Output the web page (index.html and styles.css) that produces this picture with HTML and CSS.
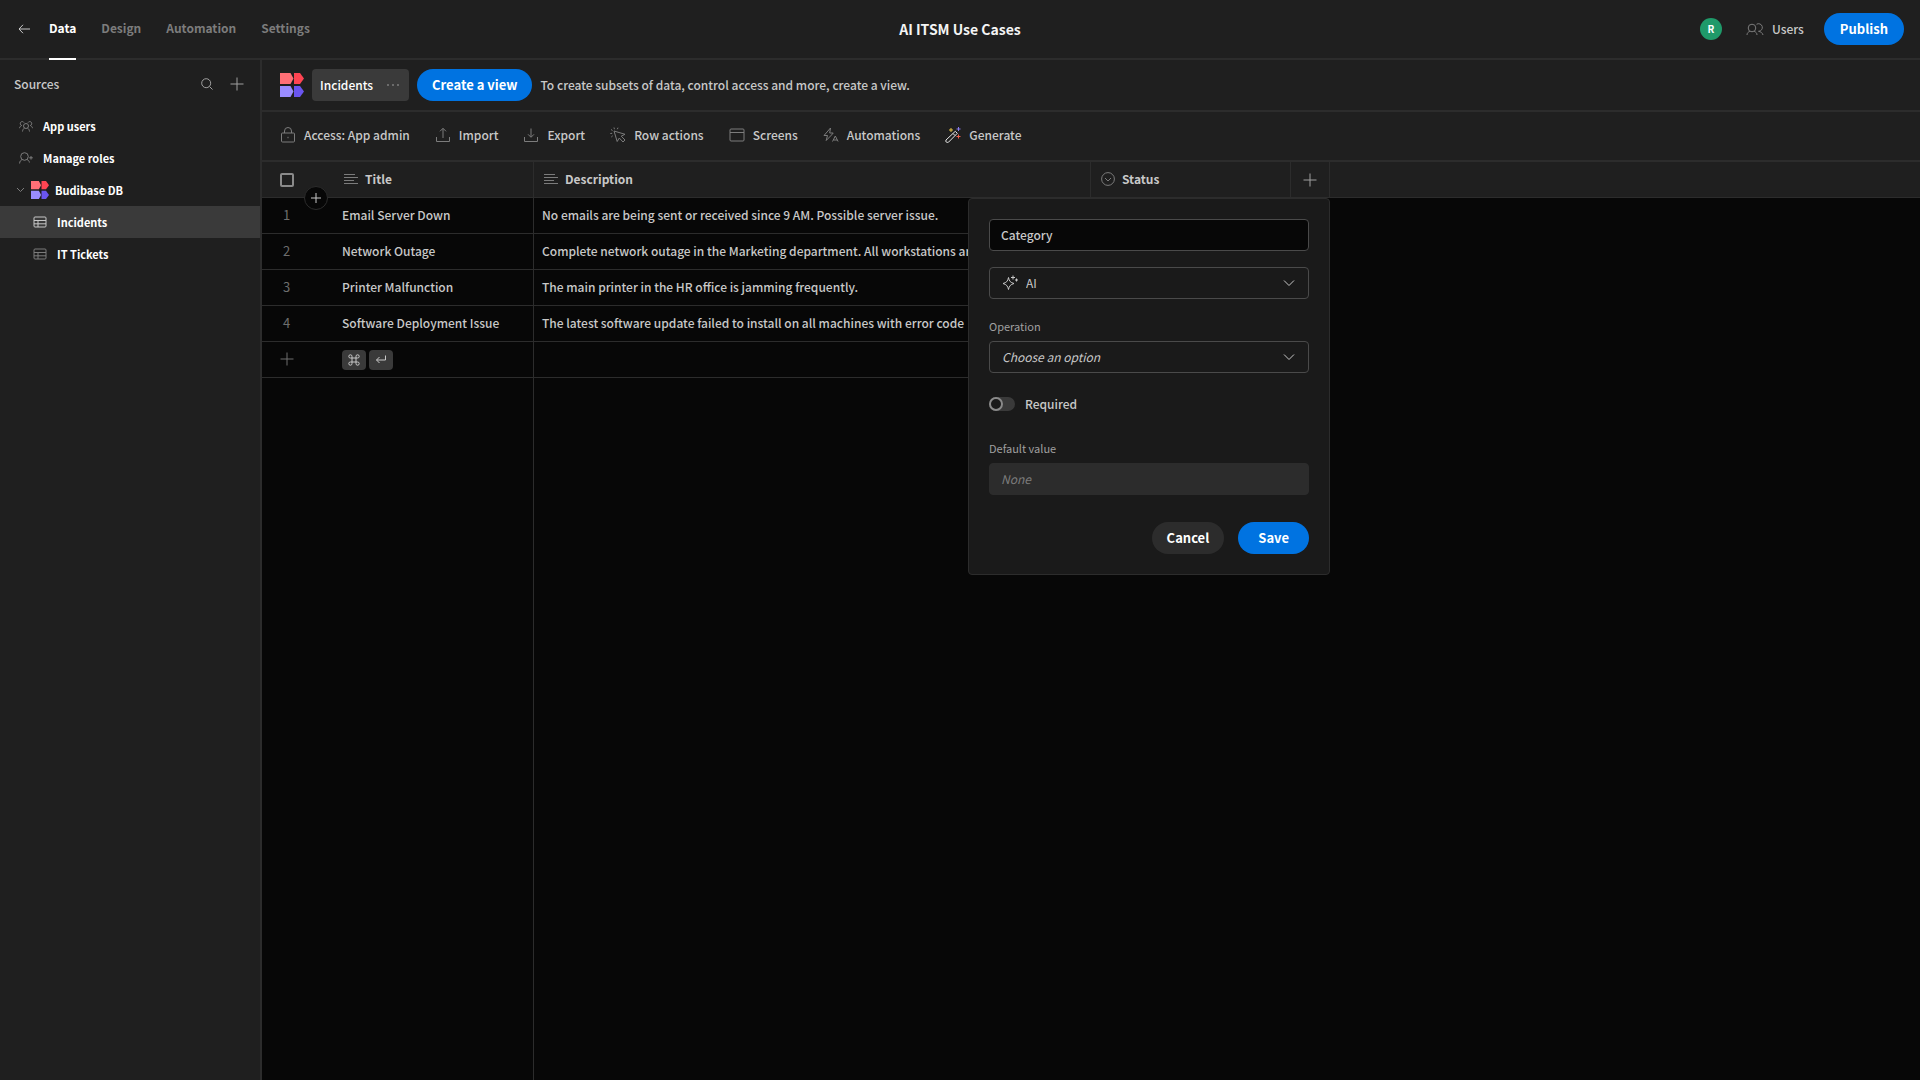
FILE: index.html
```html
<!DOCTYPE html>
<html lang="en">
<head>
	<meta charset="utf-8">
	<title>AI ITSM Use Cases</title>
	<link rel="stylesheet" href="styles.css">
</head>

<body>
<!-- shared icons -->
<svg class="sprite" aria-hidden="true">
	<symbol id="logo" viewBox="0 0 24 24">
		<path fill="#ff6f76" d="M0 0h10.500l3 5.500-3 5.500H0z"/>
		<path fill="#ff4452" d="M14 0h6l4 5.500-4 5.500h-6z"/>
		<path fill="#9a8cff" d="M0 13h10.500l3 5.500-3 5.500H0z"/>
		<path fill="#6a55f0" d="M14 13h6l4 5.500-4 5.500h-6z"/>
	</symbol>
	<symbol id="plus" viewBox="0 0 14 14">
		<path d="M7 0.500v13M0.500 7h13"/>
	</symbol>
	<symbol id="chevron" viewBox="0 0 12 8">
		<path d="M1 1.500l5 5 5-5"/>
	</symbol>
	<symbol id="table" viewBox="0 0 14 12">
		<rect x="1" y="1" width="12" height="10" rx="1"/>
		<path d="M1 4.500h12M1 7.800h12M5 4.500v6.500"/>
	</symbol>
	<symbol id="text" viewBox="0 0 14 12">
		<path d="M0 1.500h11M0 4.500h14M0 7.500h10M0 10.500h14"/>
	</symbol>
</svg>

<header class="topbar">
	<nav class="tabs">
		<a class="back" href="#" aria-label="Back">
			<svg width="12" height="10" viewBox="0 0 12 10"><path d="M5 0.800L1 5l4 4.200M1 5h11"/></svg>
		</a>
		<a class="tab active" href="#">Data</a>
		<a class="tab" href="#">Design</a>
		<a class="tab" href="#">Automation</a>
		<a class="tab" href="#">Settings</a>
	</nav>
	<h1>AI ITSM Use Cases</h1>
	<div class="account">
		<span class="avatar">R</span>
		<a class="users" href="#">
			<svg width="18" height="13" viewBox="0 0 18 13"><circle cx="6" cy="5" r="3.800"/><path d="M1 12c0-2 1.200-3 2.800-3.700M11 12c0-2-1.200-3-2.800-3.700M10.500 1.300a3.800 3.800 0 1 1 2 7c2.500.500 4 1.700 4.500 3.700"/></svg>
			Users
		</a>
		<button class="button cta">Publish</button>
	</div>
</header>

<div class="layout">
	<aside class="sidebar">
		<div class="sources">
			<h2>Sources</h2>
			<button class="icon-button" aria-label="Search">
				<svg width="12" height="12" viewBox="0 0 12 12"><circle cx="5.200" cy="5.200" r="4.500"/><path d="M8.500 8.500l3 3"/></svg>
			</button>
			<button class="icon-button" aria-label="Add source">
				<svg width="14" height="14"><use href="#plus"/></svg>
			</button>
		</div>
		<ul>
			<li>
				<a class="source" href="#">
					<svg width="14" height="12" viewBox="0 0 14 12"><circle cx="7" cy="6" r="2.500"/><path d="M3.500 11.500c.200-1.800.900-2.800 2-3.500M10.500 11.500c-.200-1.800-.900-2.800-2-3.500M5 2.600a2 2 0 1 0-2.300 2.900C1.500 6 .700 6.800.500 8.200M9 2.600a2 2 0 1 1 2.300 2.900c1.200.500 2 1.300 2.200 2.700"/></svg>
					App users
				</a>
			</li>
			<li>
				<a class="source" href="#">
					<svg width="14" height="12" viewBox="0 0 14 12"><circle cx="5.500" cy="4.500" r="3.800"/><path d="M.600 11.500c.100-2.300 1-3.200 2.600-3.900M10.400 10.500c-.200-1.500-.900-2.300-2.300-2.900M12 4v3.600M10.200 5.800h3.600"/></svg>
					Manage roles
				</a>
			</li>
			<li>
				<a class="source database" href="#">
					<svg width="9" height="6" viewBox="0 0 9 6"><path d="M1 1l3.500 3.500L8 1"/></svg>
					<svg class="logo" width="18" height="18"><use href="#logo"/></svg>
					Budibase DB
				</a>
			</li>
			<li>
				<a class="source child selected" href="#">
					<svg width="14" height="12"><use href="#table"/></svg>
					Incidents
				</a>
			</li>
			<li>
				<a class="source child" href="#">
					<svg width="14" height="12"><use href="#table"/></svg>
					IT Tickets
				</a>
			</li>
		</ul>
	</aside>

	<main>
		<div class="viewbar">
			<svg class="logo" width="24" height="24"><use href="#logo"/></svg>
			<button class="view">
				Incidents
				<svg width="12" height="2" viewBox="0 0 12 2"><circle cx="1" cy="1" r="1"/><circle cx="6" cy="1" r="1"/><circle cx="11" cy="1" r="1"/></svg>
			</button>
			<button class="button cta">Create a view</button>
			<p>To create subsets of data, control access and more, create a view.</p>
		</div>

		<div class="toolbar">
			<button>
				<svg width="16" height="16" viewBox="0 0 16 16"><rect x="1.500" y="6" width="13" height="9" rx="1"/><path d="M4.500 6V4a3.500 3.500 0 0 1 7 0v2M8 9.800v1.400"/></svg>
				Access: App admin
			</button>
			<button>
				<svg width="16" height="16" viewBox="0 0 16 16"><path d="M1.500 10v4.500h13V10M8 11V1.500M5 4.300l3-3 3 3"/></svg>
				Import
			</button>
			<button>
				<svg width="16" height="16" viewBox="0 0 16 16"><path d="M1.500 10v4.500h13V10M8 1.500V10M5 7.300l3 3 3-3"/></svg>
				Export
			</button>
			<button>
				<svg width="16" height="16" viewBox="0 0 16 16"><path d="M4 4l3.200 10.500 2.100-3.500 3.700 4 2-2-3.800-3.800L15 7.300zM1 2.500l1.500 1M4 .500l.400 1.700M8 .700l-.700 1.500M.300 6.500l1.900-.200M1.300 10l1.400-1.200"/></svg>
				Row actions
			</button>
			<button>
				<svg width="16" height="16" viewBox="0 0 16 16"><rect x="1" y="2" width="14" height="12" rx="1"/><path d="M1 5.500h14"/></svg>
				Screens
			</button>
			<button>
				<svg width="16" height="16" viewBox="0 0 16 16"><path d="M7.500 1L1 8.500h3.500l-1.300 5L8.500 8M7.500 1L6.700 6h3.500L8.500 8M9.500 14.500l2.800-5.500 2.800 5.500M10.500 13h3.700"/></svg>
				Automations
			</button>
			<button class="generate">
				<svg width="16" height="16" viewBox="0 0 16 16"><path d="M1 13l9.300-8.700 2 2L3.500 15.200C1.700 16 .200 14.800 1 13zM8 6.500l2 2"/><path class="yellow" d="M6 1v4M4 3h4"/><path class="violet" d="M13.500 0v4M11.500 2h4"/><path class="red" d="M13.500 7.500v4M11.500 9.500h4"/></svg>
				Generate
			</button>
		</div>

		<div class="grid">
			<table>
				<colgroup>
					<col class="col-gutter">
					<col class="col-title">
					<col class="col-description">
					<col class="col-status">
					<col class="col-add">
					<col>
				</colgroup>
				<thead>
				<tr>
					<th class="gutter">
						<input type="checkbox" aria-label="Select all rows">
						<button class="add-row" aria-label="Insert row">
							<svg width="10" height="10" viewBox="0 0 10 10"><path d="M5 0v10M0 5h10"/></svg>
						</button>
					</th>
					<th><span class="name"><svg width="14" height="12"><use href="#text"/></svg>Title</span></th>
					<th><span class="name"><svg width="14" height="12"><use href="#text"/></svg>Description</span></th>
					<th>
						<span class="name"><svg width="14" height="14" viewBox="0 0 14 14"><circle cx="7" cy="7" r="6.400"/><path d="M4 6l3 3 3-3"/></svg>Status</span>
					</th>
					<th class="add-column">
						<button class="icon-button" aria-label="Add column">
							<svg width="14" height="14"><use href="#plus"/></svg>
						</button>
						<form class="popover">
							<input class="field" type="text" value="Category" aria-label="Column name">
							<div class="field picker">
								<svg width="16" height="16" viewBox="0 0 16 16"><path d="M6.500 2.500c.700 3.800 2 5 5.500 6-3.500 1-4.800 2.500-5.500 6-.700-3.500-2-5-5.500-6 3.500-1 4.800-2.200 5.500-6zM11 .500v4M9 2.500h4M14.500 3.500v3M13 5h3"/></svg>
								<select aria-label="Column type">
									<option>AI</option>
								</select>
								<svg width="12" height="8"><use href="#chevron"/></svg>
							</div>
							<label class="caption" for="operation">Operation</label>
							<div class="field picker placeholder">
								<select id="operation">
									<option>Choose an option</option>
								</select>
								<svg width="12" height="8"><use href="#chevron"/></svg>
							</div>
							<label class="required"><input type="checkbox" role="switch">Required</label>
							<label class="caption" for="default">Default value</label>
							<input class="field" id="default" type="text" placeholder="None" disabled>
							<div class="actions">
								<button class="button" type="button">Cancel</button>
								<button class="button cta" type="button">Save</button>
							</div>
						</form>
					</th>
					<th></th>
				</tr>
				</thead>
				<tbody>
				<tr>
					<td class="gutter">1</td>
					<td>Email Server Down</td>
					<td>No emails are being sent or received since 9 AM. Possible server issue.</td>
					<td></td>
				</tr>
				<tr>
					<td class="gutter">2</td>
					<td>Network Outage</td>
					<td>Complete network outage in the Marketing department. All workstations are</td>
					<td></td>
				</tr>
				<tr>
					<td class="gutter">3</td>
					<td>Printer Malfunction</td>
					<td>The main printer in the HR office is jamming frequently.</td>
					<td></td>
				</tr>
				<tr>
					<td class="gutter">4</td>
					<td>Software Deployment Issue</td>
					<td>The latest software update failed to install on all machines with error code</td>
					<td></td>
				</tr>
				<tr>
					<td class="gutter">
						<button class="icon-button" aria-label="Add row">
							<svg width="14" height="14"><use href="#plus"/></svg>
						</button>
					</td>
					<td>
						<span class="keys">
							<kbd><svg width="12" height="12" viewBox="0 0 12 12"><path d="M4 4h4v4H4zM4 4H2.500A1.600 1.600 0 1 1 4 2.500zM8 4V2.500A1.600 1.600 0 1 1 9.500 4zM8 8h1.500A1.600 1.600 0 1 1 8 9.500zM4 8v1.500A1.600 1.600 0 1 1 2.500 8z"/></svg></kbd>
							<kbd><svg width="12" height="12" viewBox="0 0 12 12"><path d="M10.500 1.500V6H1.500M4.500 3l-3 3 3 3"/></svg></kbd>
						</span>
					</td>
					<td></td>
					<td></td>
				</tr>
				</tbody>
			</table>
			<div class="sticky-edge"></div>
		</div>
	</main>
</div>
</body>
</html>
```
FILE: styles.css
```css
*, ::before {
	box-sizing: border-box;
}

body {
	margin: 0;
	min-height: 100vh;
	display: flex;
	flex-direction: column;
	background: #1f1f1f;
	color: #c8c8c8;
	font-family: "Noto Sans CJK SC", "Noto Sans", sans-serif;
	font-size: 12px;
	font-weight: 500;
	line-height: 20px;
}

h1, h2, p, ul {
	margin: 0;
	padding: 0;
	list-style: none;
}

a {
	color: inherit;
	text-decoration: none;
}

button, input, select {
	margin: 0;
	font: inherit;
	color: inherit;
}

button {
	padding: 0;
	border: none;
	background: none;
}

svg {
	flex: none;
	fill: none;
	stroke: currentColor;
}

.sprite {
	position: absolute;
	width: 0;
	height: 0;
}

.logo {
	stroke: none;
}

.button {
	height: 32px;
	padding: 0 15px;
	border-radius: 16px;
	background: #2c2c2c;
	color: #fff;
	font-size: 13px;
	font-weight: 700;
}

.cta {
	background: #0073e1;
}

.icon-button {
	display: flex;
	color: #a0a0a0;
}

/* top bar */
.topbar {
	display: grid;
	grid-template-columns: 1fr auto 1fr;
	align-items: center;
	height: 60px;
	padding: 0 16px;
	border-bottom: 2px solid #2c2c2c;
}

.topbar h1 {
	color: #f4f4f4;
	font-size: 14px;
	font-weight: 700;
	line-height: 20px;
}

.tabs {
	display: flex;
	align-items: center;
	gap: 25px;
	height: 58px;
	font-weight: 700;
	color: #7c7c7c;
}

.back {
	display: flex;
	width: 16px;
	margin-right: -8px;
	padding-left: 2px;
	color: #c8c8c8;
}

.tab {
	height: 60px;
	margin-bottom: -2px;
	border-bottom: 2px solid transparent;
	line-height: 56px;
}

.tab.active {
	border-color: #fff;
	color: #fff;
}

.account {
	display: flex;
	justify-content: flex-end;
	align-items: center;
}

.account .button {
	padding: 0 16px;
}

.avatar {
	width: 22px;
	height: 22px;
	margin-right: 24px;
	border-radius: 50%;
	background: #1f9a6a;
	color: #fff;
	font-size: 10px;
	font-weight: 700;
	line-height: 22px;
	text-align: center;
}

.users {
	display: flex;
	align-items: center;
	gap: 8px;
	margin-right: 20px;
}

.users svg {
	color: #7c7c7c;
}

/* sidebar */
.layout {
	flex: 1;
	display: flex;
}

.sidebar {
	flex: none;
	width: 262px;
	border-right: 2px solid #2c2c2c;
}

.sources {
	display: flex;
	align-items: center;
	gap: 17px;
	height: 50px;
	padding: 0 16px 2px 14px;
}

.sources h2 {
	flex: 1;
	font-size: 12px;
	font-weight: 500;
	line-height: 20px;
}

.source {
	display: flex;
	align-items: center;
	gap: 10px;
	height: 32px;
	padding-left: 19px;
	color: #fff;
	font-size: 11px;
	font-weight: 700;
}

.source svg {
	color: #7c7c7c;
}

.source.database {
	gap: 6px;
	padding-left: 16px;
}

.source.child {
	padding-left: 33px;
}

.source.selected {
	background: #3a3a3a;
}

.source.selected svg {
	color: #c8c8c8;
}

/* table heading and tools */
main {
	flex: 1;
	min-width: 0;
	display: flex;
	flex-direction: column;
}

.viewbar {
	display: flex;
	align-items: center;
	gap: 8px;
	height: 52px;
	padding: 0 18px;
	border-bottom: 2px solid #2c2c2c;
}

.view {
	display: flex;
	align-items: center;
	gap: 14px;
	height: 32px;
	padding: 0 10px 0 8px;
	border-radius: 4px;
	background: #3a3a3a;
	color: #fff;
}

.view svg {
	fill: #7c7c7c;
	stroke: none;
}

.toolbar {
	display: flex;
	align-items: center;
	gap: 25px;
	height: 50px;
	padding: 0 18px 2px;
	border-bottom: 2px solid #2c2c2c;
}

.toolbar button {
	display: flex;
	align-items: center;
	gap: 8px;
}

.toolbar svg {
	color: #7c7c7c;
}

.toolbar .generate svg {
	color: #e8e8e8;
}

.toolbar .yellow {
	stroke: #e8c547;
}

.toolbar .violet {
	stroke: #8a7df0;
}

.toolbar .red {
	stroke: #f0604d;
}

/* grid */
.grid {
	flex: 1;
	display: flex;
	flex-direction: column;
	background: #070707;
}

table {
	width: 100%;
	table-layout: fixed;
	border-collapse: separate;
	border-spacing: 0;
}

.col-gutter {
	width: 72px;
}

.col-title, .col-status {
	width: 200px;
}

.col-description {
	width: 557px;
}

.col-add {
	width: 39px;
}

th, td {
	height: 36px;
	padding: 0 8px 2px;
	border-bottom: 1px solid #2c2c2c;
	text-align: left;
	white-space: nowrap;
}

th {
	border-right: 1px solid #2c2c2c;
	background: #1f1f1f;
	font-weight: 700;
}

th:last-child {
	border-right: none;
}

td {
	overflow: hidden;
}

td:nth-child(2), td:nth-child(3) {
	border-right: 1px solid #2c2c2c;
}

.gutter {
	position: relative;
	padding: 0 18px;
	border-right: none;
}

td.gutter {
	padding: 0 18px 2px 21px;
	color: #6e6e6e;
	font-size: 13px;
	font-weight: 400;
}

td.gutter .icon-button {
	margin-left: -3px;
	color: #6e6e6e;
}

.gutter input {
	display: block;
	appearance: none;
	width: 14px;
	height: 14px;
	border: 2px solid #8a8a8a;
	border-radius: 2px;
}

.add-row {
	position: absolute;
	z-index: 1;
	right: 6px;
	bottom: -13px;
	display: flex;
	align-items: center;
	justify-content: center;
	width: 24px;
	height: 24px;
	border: 1px solid #2c2c2c;
	border-radius: 50%;
	background: #070707;
	color: #c8c8c8;
}

.name {
	display: flex;
	align-items: center;
	gap: 7px;
	padding-left: 2px;
}

.name svg {
	color: #7c7c7c;
}

.add-column {
	position: relative;
	padding: 0 12px;
}

.keys {
	display: flex;
	gap: 3px;
	padding-top: 2px;
}

kbd {
	display: flex;
	align-items: center;
	justify-content: center;
	width: 24px;
	height: 20px;
	border-radius: 4px;
	background: #3a3a3a;
}

.sticky-edge {
	flex: 1;
	width: 272px;
	border-right: 1px solid #2c2c2c;
}

/* new column form */
.popover {
	position: absolute;
	z-index: 2;
	top: calc(100% + 1px);
	right: -1px;
	display: flex;
	flex-direction: column;
	width: 362px;
	padding: 20px;
	border: 1px solid #2c2c2c;
	border-radius: 4px;
	background: #1a1a1a;
	font-weight: 500;
}

.field {
	width: 100%;
	height: 32px;
	padding: 0 11px 2px;
	border: 1px solid #4a4a4a;
	border-radius: 4px;
	background: #070707;
}

.field:disabled {
	border-color: #2c2c2c;
	background: #2c2c2c;
}

.field::placeholder {
	color: #7c7c7c;
	font-style: italic;
	font-weight: 400;
}

.picker {
	display: flex;
	align-items: center;
	gap: 8px;
	margin-top: 16px;
	padding: 0 13px 0 12px;
	background: none;
	font-weight: 400;
}

.picker select {
	flex: 1;
	appearance: none;
	padding: 0;
	border: none;
	background: none;
}

.placeholder {
	margin-top: 0;
	font-style: italic;
}

.caption {
	margin-top: 16px;
	padding-bottom: 4px;
	color: #a0a0a0;
	font-size: 11px;
	font-weight: 400;
	line-height: 22px;
}

.required {
	display: flex;
	align-items: center;
	gap: 10px;
	margin: 21px 0 7px;
}

.required input {
	appearance: none;
	width: 26px;
	height: 14px;
	border-radius: 7px;
	background: #3a3a3a;
}

.required input::before {
	content: "";
	display: block;
	width: 14px;
	height: 14px;
	border: 2px solid #8a8a8a;
	border-radius: 50%;
	background: #1a1a1a;
}

.actions {
	display: flex;
	justify-content: flex-end;
	gap: 14px;
	margin-top: 27px;
}

.actions .cta {
	padding: 0 20px;
}
```
